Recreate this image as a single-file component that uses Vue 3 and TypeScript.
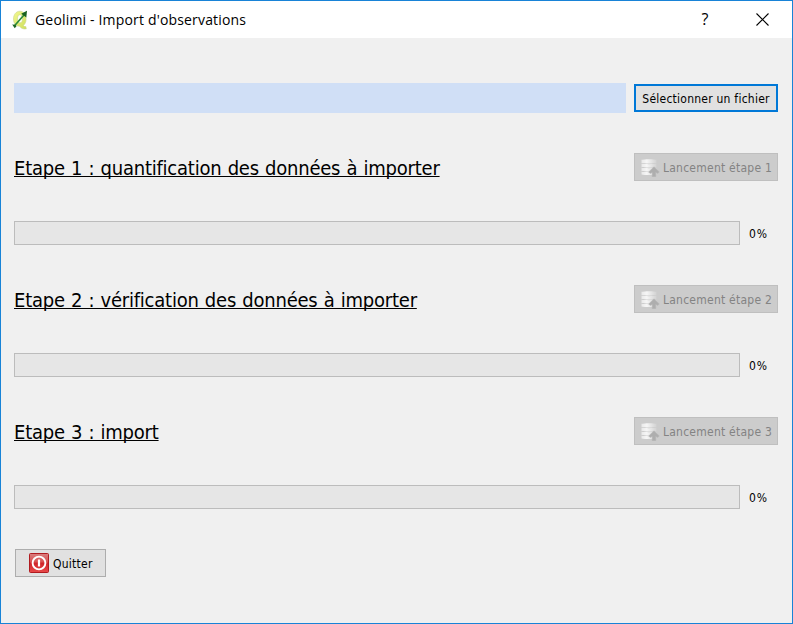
<script setup lang="ts">
import { ref } from 'vue'

interface Step {
  id: number
  label: string
  progress: number
}

const steps = ref<Step[]>([
  { id: 1, label: 'quantification des données à importer', progress: 0 },
  { id: 2, label: 'vérification des données à importer', progress: 0 },
  { id: 3, label: 'import', progress: 0 },
])
</script>

<template>
  <div class="window">
    <header class="titlebar">
      <svg class="logo" viewBox="0 0 18 20">
        <defs>
          <linearGradient id="leaf" x1="0" y1="0" x2="1" y2="1">
            <stop offset="0" stop-color="#f3f88f" />
            <stop offset="1" stop-color="#cfdf5c" />
          </linearGradient>
        </defs>
        <path fill-rule="evenodd" d="M9 1.200C5.100 1.200 2.500 4.600 2.500 9c0 4.500 2.500 7.400 6.200 7.200 1.300 2.200 3.600 3.200 6.600 2.600l-.5-2.300c-1 .2-1.800-.1-2.400-.9 2.300-2.200 3.200-5.200 2.400-8.500C14 3.300 12 1.200 9 1.200zM9 4.700c1.600 0 2.500 1.800 2.500 4s-.9 4.200-2.500 4.200-2.500-1.800-2.500-4.200.9-4 2.500-4z" fill="url(#leaf)" stroke="#c9d489" stroke-width=".6" />
        <path d="M3.500 15.700 13 5" stroke="#2b8a37" stroke-width="1.700" />
        <path d="M10.200 3.700 16 .8l-.7 6.600z" fill="#17611f" />
        <path d="m1.200 14.600 3.100.1 1.200 1.600-1.800 1.900z" fill="#1c6525" />
      </svg>
      <h1 class="title">Geolimi - Import d'observations</h1>
      <button class="caption help" type="button"><span>?</span></button>
      <button class="caption close" type="button" aria-label="Fermer">
        <svg viewBox="0 0 13 13"><path d="M.5.5l12 12M12.500.5l-12 12" stroke="#000" stroke-width="1.100" /></svg>
      </button>
    </header>

    <main class="content">
      <div class="file-row">
        <div class="file-path"></div>
        <button class="button select" type="button"><span>Sélectionner un fichier</span></button>
      </div>

      <section v-for="step in steps" :key="step.id" class="step">
        <div class="step-head">
          <h2>Etape {{ step.id }} : {{ step.label }}</h2>
          <button class="button launch" type="button" disabled>
            <svg class="db" viewBox="0 0 20 20">
              <defs>
                <linearGradient id="disc" x1="0" y1="0" x2="1" y2="0">
                  <stop offset="0" stop-color="#e9e9e9" />
                  <stop offset=".35" stop-color="#f6f6f6" />
                  <stop offset="1" stop-color="#d2d2d2" />
                </linearGradient>
              </defs>
              <g fill="url(#disc)">
                <path d="M.5 14.800c3 .5 12 .5 15 0v2.700c-3 .8-12 .8-15 0z" />
                <path d="M.5 10.800c3 .5 12 .5 15 0v3.300c-3 .6-12 .6-15 0z" />
                <path d="M.5 6.800c3 .5 12 .5 15 0v3.300c-3 .6-12 .6-15 0z" />
                <path d="M.5 2.800c3-.9 12-.9 15 0v3.300c-3 .6-12 .6-15 0z" />
              </g>
              <path d="M13 9.800l5.300 5.200-1.600 1.500-1.900-1v4.200h-3.600v-4.200l-1.900 1-1.600-1.500z" fill="#aeaeae" stroke="#b9b9b9" stroke-width=".5" />
            </svg>
            <span>Lancement étape {{ step.id }}</span>
          </button>
        </div>
        <div class="progress-row">
          <div class="progress"><div class="fill" :style="{ width: step.progress + '%' }"></div></div>
          <span class="percent">{{ step.progress }}%</span>
        </div>
      </section>

      <button class="button quit" type="button">
        <svg class="power" viewBox="0 0 20 20">
          <defs>
            <linearGradient id="red" x1="0" y1="0" x2="0" y2="1">
              <stop offset="0" stop-color="#d98080" />
              <stop offset=".45" stop-color="#d94f4f" />
              <stop offset=".5" stop-color="#cf2429" />
              <stop offset="1" stop-color="#e84a4a" />
            </linearGradient>
          </defs>
          <rect x=".5" y=".5" width="19" height="19" rx="1" fill="url(#red)" stroke="#b01b20" />
          <circle cx="10" cy="10" r="6.400" fill="none" stroke="#fff" stroke-width="1.900" />
          <path d="M10 6.500v7" stroke="#fff" stroke-width="2.200" />
        </svg>
        <span>Quitter</span>
      </button>
    </main>
  </div>
</template>

<style>
body {
  margin: 0;
}
</style>

<style scoped>
.window {
  box-sizing: border-box;
  width: 793px;
  height: 624px;
  border: 1px solid #1883d7;
  background: #f0f0f0;
  color: #000;
  font-family: "DejaVu Sans Condensed", "DejaVu Sans", sans-serif;
  font-stretch: condensed;
  font-size: 12px;
  letter-spacing: 0.24px;
  overflow: hidden;
}
.titlebar {
  display: flex;
  align-items: center;
  height: 37px;
  padding-left: 10px;
  background: #fff;
  font-family: "Open Sans", "Noto Sans", sans-serif;
  font-stretch: normal;
}
.logo {
  width: 18px;
  height: 20px;
}
.title {
  flex: 1;
  margin: 0 0 0 6px;
  font-size: 14px;
  font-weight: 400;
  line-height: 20px;
  letter-spacing: 0.17px;
  white-space: nowrap;
}
.caption {
  display: flex;
  align-items: center;
  justify-content: center;
  width: 57px;
  height: 37px;
  padding: 0;
  border: 0;
  background: none;
  color: #000;
  font: inherit;
  font-size: 16px;
}
.help span {
  padding: 0 0 2px 3px;
}
.close {
  width: 60px;
}
.close svg {
  width: 13px;
  height: 13px;
}
.content {
  padding: 45px 14px 0 13px;
}
.file-row {
  display: flex;
  align-items: center;
  gap: 8px;
  height: 30px;
  margin-bottom: 40px;
}
.file-path {
  flex: 1;
  height: 30px;
  background: #d0dff6;
}
.button {
  box-sizing: border-box;
  display: flex;
  align-items: center;
  justify-content: center;
  height: 28px;
  padding: 0;
  border: 1px solid #adadad;
  background: #e1e1e1;
  color: #000;
  font: inherit;
  letter-spacing: inherit;
  white-space: nowrap;
}
.button span,
.percent {
  padding-top: 2px;
}
.select,
.launch {
  flex: none;
  width: 144px;
}
.select {
  border: 2px solid #0078d7;
}
.launch {
  justify-content: flex-start;
  gap: 2px;
  padding-left: 6px;
  border-color: #bfbfbf;
  background: #ccc;
  color: #838383;
}
.db,
.power {
  flex: none;
  width: 20px;
  height: 20px;
}
.step {
  height: 132px;
}
.step-head {
  display: flex;
  align-items: center;
  justify-content: space-between;
  height: 28px;
  margin-bottom: 40px;
}
h2 {
  margin: 0;
  padding-top: 2px;
  font-size: 20px;
  font-weight: 400;
  line-height: 28px;
  letter-spacing: -0.22px;
  word-spacing: 0.7px;
  text-decoration: underline;
  text-decoration-thickness: 1px;
  text-decoration-skip-ink: none;
  text-underline-offset: 1px;
  white-space: nowrap;
}
.progress-row {
  display: flex;
  align-items: center;
  gap: 9px;
}
.progress {
  box-sizing: border-box;
  width: 726px;
  height: 24px;
  border: 1px solid #bcbcbc;
  background: #e6e6e6;
}
.fill {
  height: 100%;
  background: #06b025;
}
.percent {
  letter-spacing: 0.9px;
}
.quit {
  justify-content: flex-start;
  gap: 4px;
  width: 91px;
  margin-left: 1px;
  padding-left: 13px;
}
</style>
